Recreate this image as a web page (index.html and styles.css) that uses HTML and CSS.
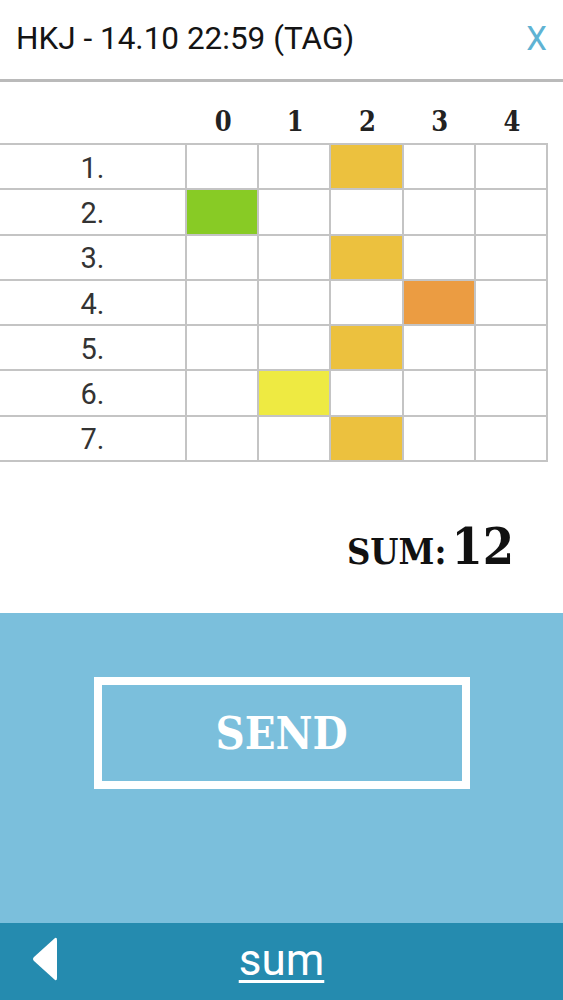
FILE: index.html
```html
<!DOCTYPE html>
<html>
<head>
<meta charset="utf-8">
<link rel="stylesheet" href="styles.css">
</head>
<body>
<div class="app">
  <header class="topbar">
    <div class="title">HKJ - 14.10 22:59 (TAG)</div>
    <div class="close">X</div>
  </header>

  <section class="board">
    <div class="colheads">
      <div class="spacer"></div>
      <div class="ch">0</div>
      <div class="ch">1</div>
      <div class="ch">2</div>
      <div class="ch">3</div>
      <div class="ch">4</div>
    </div>
    <div class="grid">
      <div class="lbl">1.</div><div class="c"></div><div class="c"></div><div class="c amber"></div><div class="c"></div><div class="c"></div>
      <div class="lbl">2.</div><div class="c green"></div><div class="c"></div><div class="c"></div><div class="c"></div><div class="c"></div>
      <div class="lbl">3.</div><div class="c"></div><div class="c"></div><div class="c amber"></div><div class="c"></div><div class="c"></div>
      <div class="lbl">4.</div><div class="c"></div><div class="c"></div><div class="c"></div><div class="c orange"></div><div class="c"></div>
      <div class="lbl">5.</div><div class="c"></div><div class="c"></div><div class="c amber"></div><div class="c"></div><div class="c"></div>
      <div class="lbl">6.</div><div class="c"></div><div class="c yellow"></div><div class="c"></div><div class="c"></div><div class="c"></div>
      <div class="lbl">7.</div><div class="c"></div><div class="c"></div><div class="c amber"></div><div class="c"></div><div class="c"></div>
    </div>
    <div class="sum"><span class="sumlabel">SUM:</span> <span class="sumval">12</span></div>
  </section>

  <section class="action">
    <div class="sendbtn">SEND</div>
  </section>

  <footer class="bottombar">
    <svg class="back" width="26" height="46" viewBox="0 0 26 46">
      <path d="M23 2 Q25 1 25 4 L25 42 Q25 45 23 44 L2 25 Q0 23 2 21 Z" fill="#ffffff"/>
    </svg>
    <div class="sumlink">sum</div>
  </footer>
</div>
</body>
</html>
```

FILE: styles.css
```css
html, body {
  margin: 0;
  padding: 0;
  background: #ffffff;
}

.app {
  width: 563px;
  height: 1000px;
  display: flex;
  flex-direction: column;
  overflow: hidden;
}

.topbar {
  height: 79px;
  border-bottom: 3px solid #bababa;
  display: flex;
  align-items: center;
  justify-content: space-between;
  padding: 0 16px 0 16px;
  box-sizing: content-box;
  width: 531px;
}

.title {
  font-family: Roboto, "Liberation Sans", sans-serif;
  font-size: 31.5px;
  color: #141414;
  padding-bottom: 3px;
}

.close {
  font-family: Roboto, "Liberation Sans", sans-serif;
  font-size: 33px;
  color: #5fb3d3;
  padding-bottom: 3px;
}

.board {
  height: 531px;
  display: flex;
  flex-direction: column;
}

.colheads {
  height: 61px;
  display: grid;
  grid-template-columns: 187px repeat(5, 72.2px);
  align-items: end;
}

.ch {
  font-family: "DejaVu Serif", serif;
  font-stretch: condensed;
  font-weight: bold;
  font-size: 27px;
  color: #222222;
  text-align: center;
  line-height: 1;
  padding-bottom: 8px;
}

.grid {
  display: grid;
  grid-template-columns: 185px repeat(5, 70.2px);
  grid-auto-rows: 43.3px;
  gap: 2px;
  background: #c4c4c4;
  padding: 2px 2px 2px 0;
  width: 546px;
}

.lbl {
  background: #ffffff;
  font-family: Roboto, "Liberation Sans", sans-serif;
  font-size: 29px;
  color: #333333;
  display: flex;
  align-items: center;
  justify-content: center;
  padding-top: 2px;
  box-sizing: border-box;
}

.c { background: #ffffff; }
.c.amber { background: #ecc13e; }
.c.green { background: #88cb25; }
.c.orange { background: #eb9c42; }
.c.yellow { background: #eeea42; }

.sum {
  text-align: right;
  padding-right: 49px;
  margin-top: 60px;
  font-family: "DejaVu Serif", serif;
  font-stretch: condensed;
  font-weight: bold;
  color: #111111;
  line-height: 1;
}

.sumlabel {
  font-size: 36px;
}

.sumval {
  font-size: 50px;
}

.action {
  height: 310px;
  background: #7bbfdc;
  display: flex;
  justify-content: center;
  align-items: flex-start;
  padding-top: 64px;
  box-sizing: border-box;
}

.sendbtn {
  width: 376px;
  height: 112px;
  border: 8px solid #ffffff;
  box-sizing: border-box;
  display: flex;
  align-items: center;
  justify-content: center;
  font-family: "DejaVu Serif", serif;
  font-stretch: condensed;
  font-weight: bold;
  font-size: 45px;
  color: #ffffff;
}

.bottombar {
  height: 77px;
  background: #258baf;
  position: relative;
  display: flex;
  align-items: center;
  justify-content: center;
}

.back {
  position: absolute;
  left: 32px;
  top: 13px;
}

.sumlink {
  font-family: Roboto, "Liberation Sans", sans-serif;
  font-size: 44px;
  color: #ffffff;
  text-decoration: underline;
  text-decoration-thickness: 3px;
  text-underline-offset: 5px;
  margin-top: -4px;
}
```
